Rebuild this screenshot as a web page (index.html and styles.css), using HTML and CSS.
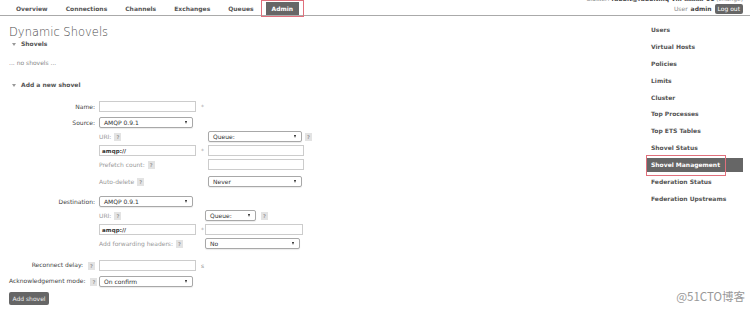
FILE: index.html
```html
<!DOCTYPE html>
<html lang="en">
<head>
<meta charset="utf-8">
<title>RabbitMQ Management - Dynamic Shovels</title>
<link rel="stylesheet" href="styles.css">
</head>
<body>
<div class="header">
  <div class="tabs">
    <span class="tab">Overview</span>
    <span class="tab">Connections</span>
    <span class="tab">Channels</span>
    <span class="tab">Exchanges</span>
    <span class="tab">Queues</span>
    <span class="tab active">Admin</span>
  </div>
  <div class="status">
    <div class="cluster">Cluster: <b>rabbit@rabbitmq-vm-xxxxx-01</b> (change)</div>
    <div class="user">User <b>admin</b> <span class="logout">Log out</span></div>
  </div>
</div>
<div class="page">
  <div class="content">
    <h1 class="title">Dynamic Shovels</h1>
    <div class="sec"><span class="tri"></span>Shovels</div>
    <p class="empty">... no shovels ...</p>
    <div class="sec sec-add"><span class="tri"></span>Add a new shovel</div>

    <div class="form">
      <div class="frow">
        <div class="lbl">Name:</div>
        <div class="val"><span class="in w97"></span><span class="star">*</span></div>
      </div>
      <div class="frow mt5">
        <div class="lbl">Source:</div>
        <div class="val"><span class="sel w94">AMQP 0.9.1</span></div>
      </div>
      <div class="sub">
        <div class="srow">
          <div class="c1 sl">URI: <span class="help">?</span></div>
          <div class="c2"></div>
          <div class="c3"><span class="sel w94">Queue:</span><span class="help">?</span></div>
        </div>
        <div class="srow">
          <div class="c1"><span class="in w97 amqp">amqp://</span></div>
          <div class="c2"><span class="star">*</span></div>
          <div class="c3"><span class="in w96"></span></div>
        </div>
        <div class="srow">
          <div class="c1 sl">Prefetch count: <span class="help">?</span></div>
          <div class="c2"></div>
          <div class="c3"><span class="in w96"></span></div>
        </div>
        <div class="srow extra">
          <div class="c1 sl">Auto-delete <span class="help">?</span></div>
          <div class="c2"></div>
          <div class="c3"><span class="sel w94">Never</span></div>
        </div>
      </div>

      <div class="frow mt9">
        <div class="lbl">Destination:</div>
        <div class="val"><span class="sel w94">AMQP 0.9.1</span></div>
      </div>
      <div class="sub dest">
        <div class="srow">
          <div class="c1 sl">URI: <span class="help">?</span></div>
          <div class="c2"></div>
          <div class="c3"><span class="sel w51">Queue:</span><span class="help hq">?</span></div>
        </div>
        <div class="srow">
          <div class="c1"><span class="in w97 amqp">amqp://</span></div>
          <div class="c2"><span class="star">*</span></div>
          <div class="c3"><span class="in w98"></span></div>
        </div>
        <div class="srow">
          <div class="c1 sl">Add forwarding headers: <span class="help">?</span></div>
          <div class="c2"></div>
          <div class="c3"><span class="sel w95">No</span></div>
        </div>
      </div>

      <div class="frow mt11">
        <div class="lbl">Reconnect delay: <span class="help">?</span></div>
        <div class="val"><span class="in w97"></span><span class="star unit">s</span></div>
      </div>
      <div class="frow mt5">
        <div class="lbl">Acknowledgement mode: <span class="help">?</span></div>
        <div class="val"><span class="sel w94">On confirm</span></div>
      </div>
      <button class="btn" type="button">Add shovel</button>
    </div>
  </div>

  <div class="sidebar">
    <div class="nav-item">Users</div>
    <div class="nav-item">Virtual Hosts</div>
    <div class="nav-item">Policies</div>
    <div class="nav-item">Limits</div>
    <div class="nav-item">Cluster</div>
    <div class="nav-item">Top Processes</div>
    <div class="nav-item">Top ETS Tables</div>
    <div class="nav-item">Shovel Status</div>
    <div class="nav-item active">Shovel Management</div>
    <div class="nav-item">Federation Status</div>
    <div class="nav-item">Federation Upstreams</div>
  </div>
</div>
<div class="wm">@51CTO博客</div>
</body>
</html>
```

FILE: styles.css
```css
* { box-sizing: border-box; }
html, body { margin: 0; padding: 0; }
body {
  width: 750px;
  height: 309px;
  overflow: hidden;
  position: relative;
  background: #fff;
  color: #444;
  font-family: "DejaVu Sans", Verdana, sans-serif;
  font-size: 6px;
  line-height: 8px;
}

/* header */
.header {
  display: flex;
  justify-content: space-between;
  align-items: flex-end;
  height: 16px;
  border-bottom: 1px solid #aaa;
  padding: 0 7px 0 10px;
}
.tabs { display: flex; gap: 6px; }
.tab {
  height: 13px;
  line-height: 13px;
  padding: 0 6px;
  font-weight: bold;
  color: #555;
}
.tab.active {
  background: #666;
  color: #fff;
  position: relative;
}
.tab.active::after {
  content: "";
  position: absolute;
  left: -5px; right: -5px; top: -2px; bottom: -2px;
  border: 1px solid #e0707c;
}
.status {
  align-self: stretch;
  display: flex;
  flex-direction: column;
  align-items: flex-end;
}
.cluster { margin-top: -5px; line-height: 8px; color: #888; white-space: nowrap; }
.cluster b, .user b { color: #444; }
.user { display: flex; align-items: center; gap: 3px; margin-top: 1px; color: #888; }
.logout {
  height: 10px;
  line-height: 10px;
  padding: 0 3px;
  background: #666;
  color: #fff;
  border-radius: 2px;
}

/* page */
.page { display: flex; }
.content { flex: 1; padding-left: 9px; }
.sidebar { width: 96px; margin-right: 7px; padding-top: 7px; }

.title {
  margin: 9px 0 0;
  font-size: 11.5px;
  line-height: 14px;
  font-weight: 300;
  color: #4a4a4a;
}
.sec {
  margin-top: 1px;
  padding-left: 3px;
  font-weight: bold;
  color: #555;
  display: flex;
  align-items: center;
}
.sec-add { margin-top: 14px; }
.tri {
  width: 0; height: 0;
  border-left: 2px solid transparent;
  border-right: 2px solid transparent;
  border-top: 3px solid #999;
  margin-right: 5px;
}
.empty { margin: 11px 0 0; color: #888; }

/* form */
.form { margin-top: 12px; }
.frow { display: flex; align-items: center; height: 11px; }
.mt5 { margin-top: 5px; }
.mt9 { margin-top: 9px; }
.mt11 { margin-top: 11px; }
.lbl {
  width: 86px;
  margin-right: 4px;
  text-align: right;
  white-space: nowrap;
  color: #444;
}
.val { display: flex; align-items: center; }

.sub {
  margin: 3px 0 0 90px;
  display: flex;
  flex-direction: column;
  gap: 3px;
}
.srow {
  display: grid;
  grid-template-columns: 97px 12px 1fr;
  height: 11px;
  align-items: center;
}
.sub.dest .srow { grid-template-columns: 97px 9px 1fr; }
.srow.extra { margin-top: 3px; }
.c1, .c3 { display: flex; align-items: center; white-space: nowrap; }
.sl { color: #999; }

.in {
  display: flex;
  align-items: center;
  height: 11px;
  border: 1px solid #ccc;
  background: #fff;
  padding-left: 2px;
}
.amqp { color: #333; font-size: 5.5px; font-weight: bold; letter-spacing: 0.1px; }
.w96 { width: 96px; }
.w97 { width: 97px; }
.w98 { width: 98px; }
.w94 { width: 94px; }
.w95 { width: 95px; }
.w51 { width: 51px; }

.sel {
  display: flex;
  align-items: center;
  justify-content: space-between;
  height: 11px;
  padding: 0 5px 0 4px;
  border: 1px solid #a8a8a8;
  border-radius: 2px;
  background: #fff;
  color: #333;
  box-shadow: 0 1px 1px rgba(0,0,0,0.08);
}
.sel::after {
  content: "";
  width: 0; height: 0;
  border-left: 1.5px solid transparent;
  border-right: 1.5px solid transparent;
  border-top: 3px solid #222;
}
.star { margin-left: 5px; color: #aaa; }
.unit { color: #888; }

.help {
  display: inline-block;
  width: 7px;
  height: 8px;
  line-height: 8px;
  margin-left: 3px;
  background: #e3e3e3;
  color: #9a9a9a;
  font-size: 5px;
  font-weight: bold;
  text-align: center;
  vertical-align: middle;
}
.hq { margin-left: 5px; }

.btn {
  display: block;
  margin: 5px 0 0 0;
  width: 40px;
  height: 13px;
  padding: 0;
  border: 0;
  border-radius: 2px;
  background: #666;
  color: #eee;
  font-family: "DejaVu Sans", Verdana, sans-serif;
  font-size: 6px;
}

/* sidebar */
.nav-item {
  height: 14px;
  line-height: 14px;
  margin-bottom: 2.9px;
  padding-left: 4px;
  font-weight: bold;
  color: #555;
  white-space: nowrap;
}
.nav-item.active {
  position: relative;
  background: #666;
  color: #fff;
}
.nav-item.active::after {
  content: "";
  position: absolute;
  left: -1px; top: -3px;
  width: 78px; height: 19px;
  border: 1px solid #e0707c;
}

.wm {
  position: absolute;
  right: 5px;
  bottom: 7px;
  line-height: 12px;
  font-family: "Noto Sans CJK SC", sans-serif;
  font-size: 11.5px;
  color: #999;
}
```
